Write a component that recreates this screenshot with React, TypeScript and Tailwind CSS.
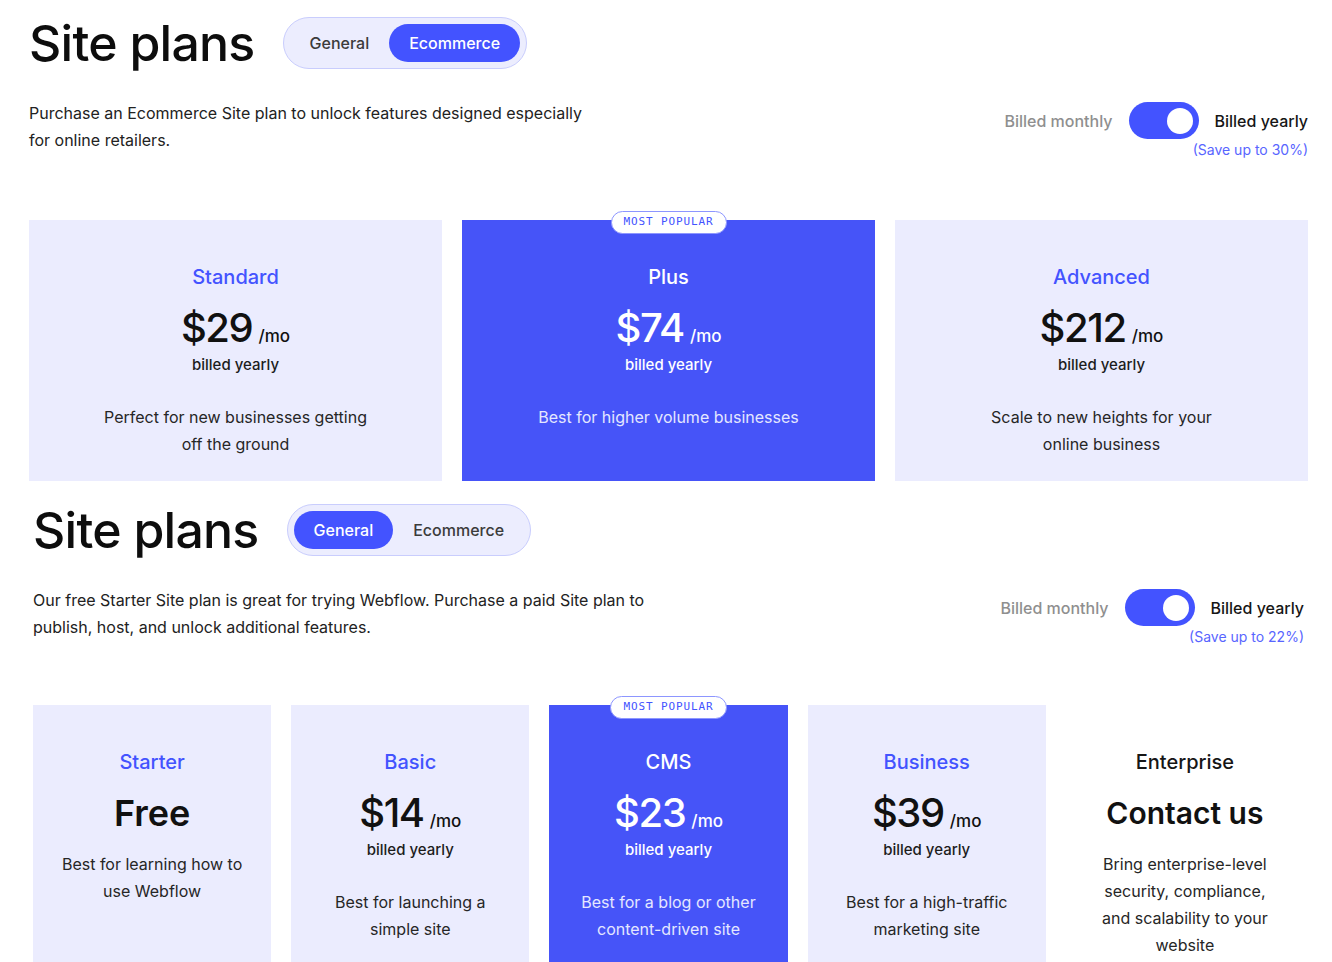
import React from "react";

type Plan = {
  name: string;
  price?: string;
  big?: string;
  billed?: boolean;
  desc: string;
  popular?: boolean;
  plain?: boolean;
};

const ECOM: Plan[] = [
  { name: "Standard", price: "$29", billed: true, desc: "Perfect for new businesses getting off the ground" },
  { name: "Plus", price: "$74", billed: true, desc: "Best for higher volume businesses", popular: true },
  { name: "Advanced", price: "$212", billed: true, desc: "Scale to new heights for your online business" },
];

const GENERAL: Plan[] = [
  { name: "Starter", big: "Free", desc: "Best for learning how to use Webflow" },
  { name: "Basic", price: "$14", billed: true, desc: "Best for launching a simple site" },
  { name: "CMS", price: "$23", billed: true, desc: "Best for a blog or other content-driven site", popular: true },
  { name: "Business", price: "$39", billed: true, desc: "Best for a high-traffic marketing site" },
  { name: "Enterprise", big: "Contact us", desc: "Bring enterprise-level security, compliance, and scalability to your website", plain: true },
];

function PlanTabs({ active }: { active: "General" | "Ecommerce" }) {
  return (
    <div className="flex items-center p-[6px] rounded-full border border-[#c9cdfd] bg-[#ecedfe]">
      {(["General", "Ecommerce"] as const).map((t) => (
        <button
          key={t}
          className={`h-[38px] px-5 rounded-full text-[16px] font-medium ${
            t === active ? "bg-[#4353ff] text-white" : "text-[#3b3b3b]"
          }`}
        >
          {t}
        </button>
      ))}
    </div>
  );
}

function Billing({ save }: { save: string }) {
  return (
    <div className="flex flex-col items-end mt-[2px]">
      <div className="flex items-center">
        <span className="text-[16px] font-medium text-[#8f8f8f]">Billed monthly</span>
        <div className="ml-4 w-[70px] h-[37px] rounded-full bg-[#4353ff] flex items-center justify-end pr-[6px]">
          <div className="w-[26px] h-[26px] rounded-full bg-white" />
        </div>
        <span className="ml-4 text-[16px] font-medium text-[#161616]">Billed yearly</span>
      </div>
      <span className="mt-[1px] text-[14px] leading-[20px] text-[#5865ff]">({save})</span>
    </div>
  );
}

function Card({ plan }: { plan: Plan }) {
  const blue = plan.popular;
  const bg = plan.plain ? "bg-white" : blue ? "bg-[#4654f8]" : "bg-[#ebecfe]";
  return (
    <div className={`relative flex flex-col items-center text-center px-6 pt-[43px] pb-[23px] ${bg}`}>
      {blue && (
        <span className="absolute top-[-9px] left-1/2 -translate-x-1/2 h-[23px] px-3 flex items-center rounded-full bg-white border border-[#8d96ff] text-[11px] tracking-[0.08em] text-[#4353ff] font-['DejaVu_Sans_Mono',monospace]">
          MOST POPULAR
        </span>
      )}
      <div
        className={`text-[20px] leading-[28px] font-medium ${
          blue ? "text-white" : plan.plain ? "text-[#161616]" : "text-[#4353ff]"
        }`}
      >
        {plan.name}
      </div>
      {plan.price && (
        <div className={`mt-[13px] h-[48px] flex items-baseline ${blue ? "text-white" : "text-[#111]"}`}>
          <span className="text-[40px] leading-[48px] font-medium tracking-[-0.035em]">{plan.price}</span>
          <span className="ml-1.5 text-[17px] font-medium">/mo</span>
        </div>
      )}
      {plan.big && (
        <div
          className={`mt-[13px] h-[48px] leading-[48px] font-semibold text-[#111] ${
            plan.plain ? "text-[30px]" : "text-[36px]"
          }`}
        >
          {plan.big}
        </div>
      )}
      {plan.billed && (
        <div className={`mt-[2px] text-[15px] leading-[22px] font-medium ${blue ? "text-white" : "text-[#1c1c1c]"}`}>
          billed yearly
        </div>
      )}
      <p
        className={`max-w-[266px] text-[16px] leading-[27px] ${plan.billed ? "mt-[28px]" : "mt-[14px]"} ${
          blue ? "text-[#e4e7ff]" : "text-[#262626]"
        }`}
      >
        {plan.desc}
      </p>
    </div>
  );
}

function Section({
  active,
  intro,
  introWidth,
  save,
  plans,
  cols,
  gridTop,
  className,
}: {
  active: "General" | "Ecommerce";
  intro: string;
  introWidth: string;
  save: string;
  plans: Plan[];
  cols: string;
  gridTop: string;
  className: string;
}) {
  return (
    <section className={className}>
      <div className="flex items-center gap-7">
        <h1 className="text-[50px] leading-[52px] font-medium tracking-[-0.015em] text-[#0d0d0d]">Site plans</h1>
        <PlanTabs active={active} />
      </div>
      <div className="flex items-start justify-between mt-[31px]">
        <p className={`text-[16px] leading-[27px] text-[#222] ${introWidth}`}>{intro}</p>
        <Billing save={save} />
      </div>
      <div className={`grid gap-5 ${gridTop} ${cols}`}>
        {plans.map((p) => (
          <Card key={p.name} plan={p} />
        ))}
      </div>
    </section>
  );
}

export default function App() {
  return (
    <div className="bg-white min-h-screen h-[962px] overflow-hidden font-['Inter',sans-serif]">
      <Section
        className="pl-[29px] pr-[24px] pt-[17px]"
        active="Ecommerce"
        intro="Purchase an Ecommerce Site plan to unlock features designed especially for online retailers."
        introWidth="max-w-[570px]"
        save="Save up to 30%"
        plans={ECOM}
        cols="grid-cols-3"
        gridTop="mt-[60px]"
      />
      <Section
        className="pl-[33px] pr-[28px] pt-[23px]"
        active="General"
        intro="Our free Starter Site plan is great for trying Webflow. Purchase a paid Site plan to publish, host, and unlock additional features."
        introWidth="max-w-[650px]"
        save="Save up to 22%"
        plans={GENERAL}
        cols="grid-cols-5"
        gridTop="mt-[58px]"
      />
    </div>
  );
}
